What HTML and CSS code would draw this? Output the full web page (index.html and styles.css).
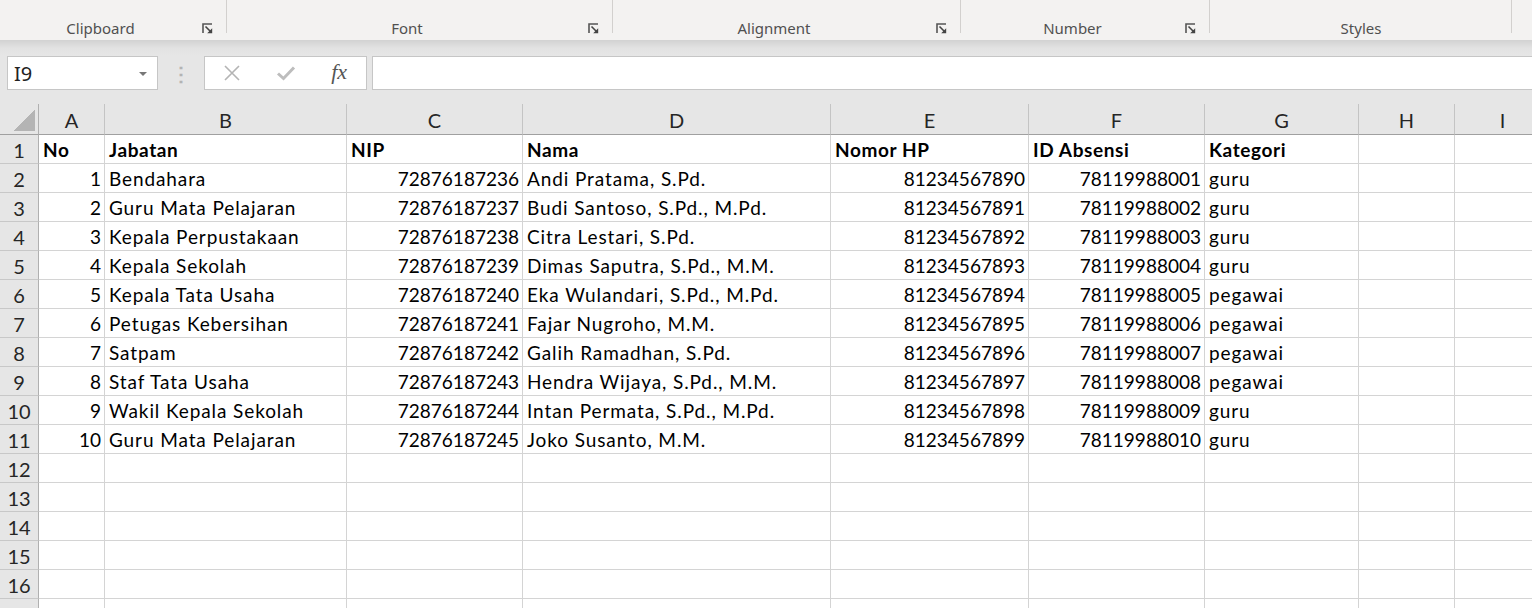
FILE: index.html
```html
<!DOCTYPE html>
<html lang="id">
<head>
    <meta charset="UTF-8">
    <meta name="viewport" content="width=device-width, initial-scale=1.0">
    <title>Data Pegawai - Excel</title>
    <link rel="stylesheet" href="styles.css">
</head>
<body>
    <div class="ribbon">
        <div class="group g-clipboard">
            <span class="group-label">Clipboard</span>
            <span class="launcher"><svg width="11" height="11" viewBox="0 0 11 11"><path d="M1 10V1H10" fill="none" stroke="#555" stroke-width="1.6"/><path d="M3.5 3.5L9 9" stroke="#444" stroke-width="1.6"/><path d="M10.2 5.2V10.2H5.2Z" fill="#444"/></svg></span>
        </div>
        <div class="group g-font">
            <span class="group-label">Font</span>
            <span class="launcher"><svg width="11" height="11" viewBox="0 0 11 11"><path d="M1 10V1H10" fill="none" stroke="#555" stroke-width="1.6"/><path d="M3.5 3.5L9 9" stroke="#444" stroke-width="1.6"/><path d="M10.2 5.2V10.2H5.2Z" fill="#444"/></svg></span>
        </div>
        <div class="group g-align">
            <span class="group-label">Alignment</span>
            <span class="launcher"><svg width="11" height="11" viewBox="0 0 11 11"><path d="M1 10V1H10" fill="none" stroke="#555" stroke-width="1.6"/><path d="M3.5 3.5L9 9" stroke="#444" stroke-width="1.6"/><path d="M10.2 5.2V10.2H5.2Z" fill="#444"/></svg></span>
        </div>
        <div class="group g-number">
            <span class="group-label">Number</span>
            <span class="launcher"><svg width="11" height="11" viewBox="0 0 11 11"><path d="M1 10V1H10" fill="none" stroke="#555" stroke-width="1.6"/><path d="M3.5 3.5L9 9" stroke="#444" stroke-width="1.6"/><path d="M10.2 5.2V10.2H5.2Z" fill="#444"/></svg></span>
        </div>
        <div class="group g-styles">
            <span class="group-label">Styles</span>
        </div>
        <div class="group g-rest"></div>
    </div>

    <div class="formula-bar">
        <div class="name-box">
            <span>I9</span>
            <svg class="name-arrow" width="8" height="4" viewBox="0 0 8 4"><path d="M0 0H8L4 4Z" fill="#777"/></svg>
        </div>
        <div class="grip">⋮</div>
        <div class="fx-buttons">
            <span class="fx-btn"><svg width="16" height="16" viewBox="0 0 16 16"><path d="M1 1L15 15M15 1L1 15" stroke="#b4b4b4" stroke-width="1.6"/></svg></span>
            <span class="fx-btn"><svg width="20" height="16" viewBox="0 0 20 16"><path d="M2 8.5L7.5 13.5L18 2.5" fill="none" stroke="#bdbdbd" stroke-width="3"/></svg></span>
            <span class="fx-btn fx-label">fx</span>
        </div>
        <div class="formula-input"></div>
    </div>

    <div class="sheet" id="sheet"></div>

    <script>
        const letters = ['A', 'B', 'C', 'D', 'E', 'F', 'G', 'H', 'I'];
        const rows = [
            ['No', 'Jabatan', 'NIP', 'Nama', 'Nomor HP', 'ID Absensi', 'Kategori'],
            [1, 'Bendahara', 72876187236, 'Andi Pratama, S.Pd.', 81234567890, 78119988001, 'guru'],
            [2, 'Guru Mata Pelajaran', 72876187237, 'Budi Santoso, S.Pd., M.Pd.', 81234567891, 78119988002, 'guru'],
            [3, 'Kepala Perpustakaan', 72876187238, 'Citra Lestari, S.Pd.', 81234567892, 78119988003, 'guru'],
            [4, 'Kepala Sekolah', 72876187239, 'Dimas Saputra, S.Pd., M.M.', 81234567893, 78119988004, 'guru'],
            [5, 'Kepala Tata Usaha', 72876187240, 'Eka Wulandari, S.Pd., M.Pd.', 81234567894, 78119988005, 'pegawai'],
            [6, 'Petugas Kebersihan', 72876187241, 'Fajar Nugroho, M.M.', 81234567895, 78119988006, 'pegawai'],
            [7, 'Satpam', 72876187242, 'Galih Ramadhan, S.Pd.', 81234567896, 78119988007, 'pegawai'],
            [8, 'Staf Tata Usaha', 72876187243, 'Hendra Wijaya, S.Pd., M.M.', 81234567897, 78119988008, 'pegawai'],
            [9, 'Wakil Kepala Sekolah', 72876187244, 'Intan Permata, S.Pd., M.Pd.', 81234567898, 78119988009, 'guru'],
            [10, 'Guru Mata Pelajaran', 72876187245, 'Joko Susanto, M.M.', 81234567899, 78119988010, 'guru']
        ];

        const sheet = document.getElementById('sheet');

        function addCell(cls, text) {
            const div = document.createElement('div');
            div.className = cls;
            div.textContent = text;
            sheet.appendChild(div);
        }

        // header kolom
        addCell('corner', '');
        letters.forEach(l => addCell('col-head', l));

        // baris data + baris kosong sampai 17
        for (let r = 1; r <= 17; r++) {
            addCell('row-head', r);
            const data = rows[r - 1] || [];
            for (let c = 0; c < letters.length; c++) {
                const val = data[c];
                let cls = 'cell';
                if (r === 1) cls += ' bold';
                if (typeof val === 'number') cls += ' num';
                addCell(cls, val === undefined ? '' : val);
            }
        }
    </script>
</body>
</html>
```

FILE: styles.css
```css
body {
    margin: 0;
    height: 608px;
    overflow: hidden;
    background: #fff;
    font-family: Lato, "Liberation Sans", sans-serif;
}

/* ribbon */
.ribbon {
    display: flex;
    height: 40px;
    background: #f3f2f1;
}
.group {
    display: flex;
    align-items: flex-end;
    padding-bottom: 2px;
    box-sizing: border-box;
    background: linear-gradient(#d2d0ce, #d2d0ce) right top / 1px 33px no-repeat;
}
.g-clipboard { width: 227px; }
.g-font { width: 386px; }
.g-align { width: 348px; }
.g-number { width: 249px; }
.g-styles { width: 302px; }
.g-rest { flex: 1; background: none; }
.group-label {
    flex: 1;
    text-align: center;
    font-family: "Noto Sans", "Open Sans", sans-serif;
    font-size: 15px;
    line-height: 20px;
    color: #505050;
}
.launcher {
    width: 11px;
    height: 20px;
    margin: 0 14px 0 1px;
    display: flex;
    align-items: center;
}

/* formula bar */
.formula-bar {
    display: flex;
    height: 64px;
    padding-top: 16px;
    box-sizing: border-box;
    background: linear-gradient(#d2d2d2 0, #e2e2e2 8px, #e6e6e6 16px);
}
.name-box, .fx-buttons, .formula-input {
    height: 34px;
    box-sizing: border-box;
    background: #fff;
    border: 1px solid #c6c6c6;
}
.name-box {
    width: 151px;
    margin-left: 7px;
    display: flex;
    align-items: center;
    justify-content: space-between;
    padding: 0 10px 0 6px;
    font-family: "Noto Sans", sans-serif;
    font-size: 20px;
    color: #222;
}
.name-arrow {
    margin-top: 2px;
}
.grip {
    width: 46px;
    text-align: center;
    line-height: 34px;
    font-size: 20px;
    font-weight: bold;
    color: #b3b3b3;
}
.fx-buttons {
    width: 163px;
    display: flex;
}
.fx-btn {
    width: 54px;
    display: flex;
    align-items: center;
    justify-content: center;
}
.fx-label {
    font-family: "Liberation Serif", serif;
    font-style: italic;
    font-size: 22px;
    color: #555;
    padding-bottom: 2px;
}
.formula-input {
    flex: 1;
    margin-left: 5px;
    margin-right: -1px;
}

/* lembar kerja */
.sheet {
    display: grid;
    grid-template-columns: 39px 66px 242px 176px 308px 198px 176px 154px 96px 96px;
    grid-template-rows: 31px;
    grid-auto-rows: 29px;
    font-size: 19px;
    color: #000;
}
.sheet > div {
    box-sizing: border-box;
    border-right: 1px solid #d4d4d4;
    border-bottom: 1px solid #d4d4d4;
    white-space: nowrap;
    overflow: hidden;
}
.corner {
    background: #e6e6e6 linear-gradient(to top left, #b4b4b4 50%, transparent 50%) right 3px bottom 3px / 21px 21px no-repeat;
    border-right-color: #b0b0b0 !important;
    border-bottom-color: #a0a0a0 !important;
}
.col-head {
    background: #e6e6e6;
    text-align: center;
    font-size: 20px;
    line-height: 32px;
    color: #262626;
    border-right-color: #c4c4c4 !important;
    border-bottom-color: #a0a0a0 !important;
}
.row-head {
    background: #e6e6e6;
    text-align: center;
    font-size: 20px;
    line-height: 30px;
    color: #262626;
    border-right-color: #b0b0b0 !important;
    border-bottom-color: #c8c8c8 !important;
}
.cell {
    padding: 0 3px 0 4px;
    line-height: 30px;
    letter-spacing: 0.9px;
}
.cell.num {
    text-align: right;
    letter-spacing: 0;
}
.cell.bold {
    font-weight: bold;
    letter-spacing: 0.6px;
}
```
